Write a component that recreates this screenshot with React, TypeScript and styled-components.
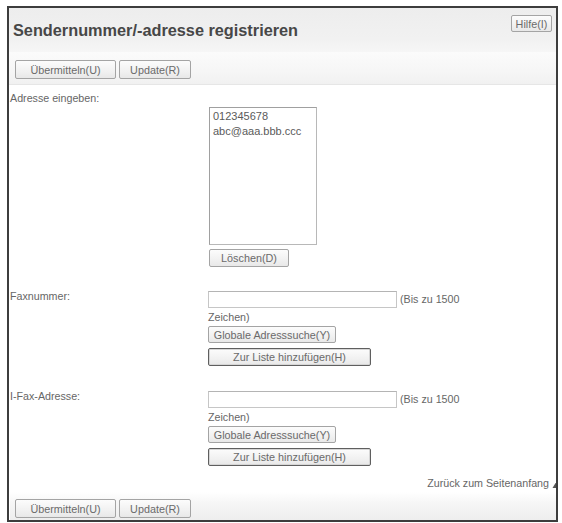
import React from "react";
import styled, { createGlobalStyle } from "styled-components";

const Global = createGlobalStyle`
  html, body { margin: 0; padding: 0; background: #ffffff; }
  body { font-family: "Liberation Sans", Arial, sans-serif; color: #666; }
`;

const Frame = styled.div`
  margin: 6px 0 0 7px;
  width: 551px;
  height: 516px;
  box-sizing: border-box;
  border: 2px solid #3d3d3d;
  overflow: hidden;
  display: flex;
  flex-direction: column;
  background: #fff;
`;

const Header = styled.div`
  display: flex;
  flex-direction: column;
  border-bottom: 1px solid #e6e6e6;
`;

const TitleBar = styled.div`
  height: 44px;
  display: flex;
  justify-content: space-between;
  align-items: flex-start;
  padding: 0 4px 0 4px;
  background: linear-gradient(to bottom, #ededed 0%, #f1f1f1 70%, #f6f6f6 100%);
`;

const Title = styled.h1`
  margin: 12px 0 0 0;
  font: bold 16.3px/20px "Liberation Sans", Arial, sans-serif;
  color: #474747;
`;

const ToolBar = styled.div<{ $bottom?: boolean }>`
  display: flex;
  flex-shrink: 0;
  gap: 3px;
  padding: ${(p) => (p.$bottom ? "7px 0 2px 5px" : "8px 0 5px 6px")};
  background: ${(p) =>
    p.$bottom
      ? "linear-gradient(to bottom, #ffffff 0%, #f6f6f6 40%, #eeeeee 100%)"
      : "linear-gradient(to bottom, #fbfbfb 0%, #f7f7f7 50%, #f1f1f1 100%)"};
`;

const Btn = styled.button<{ $w: number; $h?: number; $strong?: boolean }>`
  display: block;
  box-sizing: border-box;
  width: ${(p) => p.$w}px;
  height: ${(p) => p.$h ?? 18}px;
  padding: 0;
  font: 10.8px "Liberation Sans", Arial, sans-serif;
  color: #6a6a6a;
  background: linear-gradient(to bottom, #fcfcfc 0%, #f1f1f1 60%, #e8e8e8 100%);
  border: 1px solid ${(p) => (p.$strong ? "#5f5f5f" : "#a4a4a4")};
  border-radius: 2px;
  box-shadow: ${(p) => (p.$strong ? "inset 0 0 0 1px #d6d6d6" : "none")};
  white-space: nowrap;
`;

const HelpBtn = styled(Btn)`
  margin-top: 7px;
`;

const Body = styled.div`
  flex: 1;
  min-height: 0;
  display: flex;
  flex-direction: column;
  padding: 7px 0 0 1px;
`;

const Label = styled.div`
  font-size: 10.7px;
  line-height: 13px;
  color: #666;
`;

const AddressBlock = styled.div`
  margin: 2px 0 0 199px;
  display: flex;
  flex-direction: column;
  gap: 4px;
`;

const ListBox = styled.div`
  box-sizing: border-box;
  width: 108px;
  height: 138px;
  border: 1px solid #b8b8b8;
  border-top-color: #a0a0a0;
  border-left-color: #a0a0a0;
  padding: 1px 0 0 3px;
  font-size: 11px;
  line-height: 15px;
  color: #5a5a5a;
`;

const ListItem = styled.div`
  white-space: nowrap;
`;

const Field = styled.div<{ $gap: number }>`
  display: grid;
  grid-template-columns: 198px 266px;
  align-items: start;
  margin-top: ${(p) => p.$gap}px;
`;

const Control = styled.div`
  font-size: 10.7px;
  line-height: 18px;
  color: #666;
`;

const TextInput = styled.input`
  box-sizing: border-box;
  width: 189px;
  height: 17px;
  vertical-align: bottom;
  border: 1px solid #c6c6c6;
  border-top-color: #b4b4b4;
  padding: 0 2px;
  font: 11px "Liberation Sans", Arial, sans-serif;
  background: #fff;
`;

const Hint = styled.span`
  margin-left: 3px;
`;

const ButtonStack = styled.div`
  display: flex;
  flex-direction: column;
  gap: 5px;
  margin-top: 0;
`;

const BackTop = styled.div`
  display: flex;
  justify-content: flex-end;
  align-items: center;
  gap: 3px;
  margin: 11px -6px 0 0;
  font-size: 10.7px;
  line-height: 13px;
  color: #666;
`;

const Spacer = styled.div`
  flex: 1;
`;

function UpIcon() {
  return (
    <svg width="10" height="10" viewBox="0 0 10 10" aria-hidden="true">
      <path d="M5 1.5 L9.5 9 L0.5 9 Z" fill="#555" />
    </svg>
  );
}

export default function App() {
  return (
    <>
      <Global />
      <Frame>
        <Header>
          <TitleBar>
            <Title>Sendernummer/-adresse registrieren</Title>
            <HelpBtn $w={41} $h={17}>Hilfe(I)</HelpBtn>
          </TitleBar>
          <ToolBar>
            <Btn $w={101} $h={19}>Übermitteln(U)</Btn>
            <Btn $w={72} $h={19}>Update(R)</Btn>
          </ToolBar>
        </Header>
        <Body>
          <Label>Adresse eingeben:</Label>
          <AddressBlock>
            <ListBox>
              <ListItem>012345678</ListItem>
              <ListItem>abc@aaa.bbb.ccc</ListItem>
            </ListBox>
            <Btn $w={80}>Löschen(D)</Btn>
          </AddressBlock>

          <Field $gap={23}>
            <Label>Faxnummer:</Label>
            <Control>
              <TextInput type="text" />
              <Hint>(Bis zu 1500 Zeichen)</Hint>
              <ButtonStack>
                <Btn $w={128} $h={17}>Globale Adresssuche(Y)</Btn>
                <Btn $w={163} $h={18} $strong>Zur Liste hinzufügen(H)</Btn>
              </ButtonStack>
            </Control>
          </Field>

          <Field $gap={24}>
            <Label>I-Fax-Adresse:</Label>
            <Control>
              <TextInput type="text" />
              <Hint>(Bis zu 1500 Zeichen)</Hint>
              <ButtonStack>
                <Btn $w={128} $h={17}>Globale Adresssuche(Y)</Btn>
                <Btn $w={163} $h={18} $strong>Zur Liste hinzufügen(H)</Btn>
              </ButtonStack>
            </Control>
          </Field>

          <BackTop>
            <span>Zurück zum Seitenanfang</span>
            <UpIcon />
          </BackTop>
          <Spacer />
          <ToolBar $bottom>
            <Btn $w={101} $h={19}>Übermitteln(U)</Btn>
            <Btn $w={72} $h={19}>Update(R)</Btn>
          </ToolBar>
        </Body>
      </Frame>
    </>
  );
}
